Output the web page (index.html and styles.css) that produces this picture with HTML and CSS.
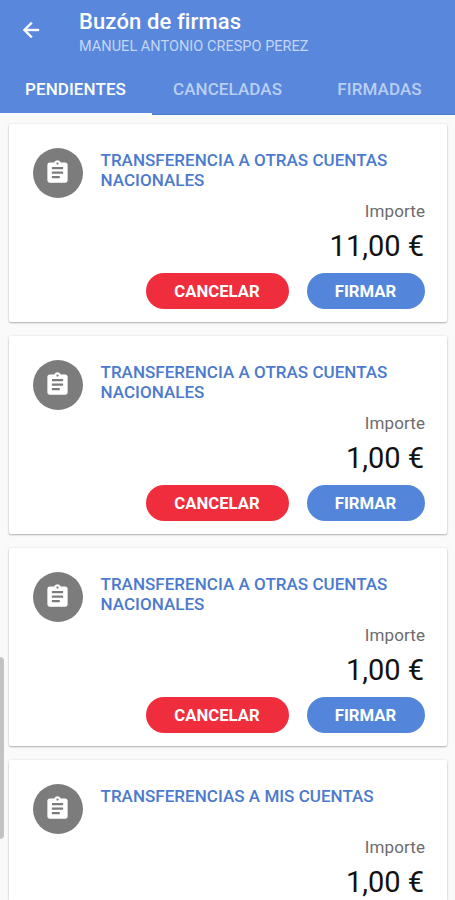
FILE: index.html
```
<!DOCTYPE html>
<html lang="es">
<head>
<meta charset="utf-8">
<title>Buzón de firmas</title>
<link rel="stylesheet" href="styles.css">
</head>
<body>
<svg width="0" height="0" class="defs">
  <symbol id="clipboard" viewBox="0 0 24 24"><path fill="#fff" d="M19 3h-4.18C14.4 1.84 13.3 1 12 1s-2.4.84-2.82 2H5c-1.1 0-2 .9-2 2v14c0 1.1.9 2 2 2h14c1.1 0 2-.9 2-2V5c0-1.1-.9-2-2-2zm-7 0c.55 0 1 .45 1 1s-.45 1-1 1-1-.45-1-1 .45-1 1-1zm2 14H7v-2h7v2zm3-4H7v-2h10v2zm0-4H7V7h10v2z"/></symbol>
</svg>
<header class="header">
  <div class="bar">
    <svg class="back" viewBox="0 0 24 24"><path fill="#fff" stroke="#fff" stroke-width=".4" d="M20 11H7.83l5.59-5.59L12 4l-8 8 8 8 1.41-1.41L7.83 13H20z"/></svg>
    <div>
      <h1 class="title">Buzón de firmas</h1>
      <div class="user">MANUEL ANTONIO CRESPO PEREZ</div>
    </div>
  </div>
  <nav class="tabs">
    <div class="tab active"><span>PENDIENTES</span></div>
    <div class="tab"><span>CANCELADAS</span></div>
    <div class="tab"><span>FIRMADAS</span></div>
  </nav>
</header>
<main class="list">
  <article class="card">
    <div class="top"><div class="avatar"><svg><use href="#clipboard"/></svg></div><h2 class="name">TRANSFERENCIA A OTRAS CUENTAS NACIONALES</h2></div>
    <div class="label">Importe</div>
    <div class="amount">11,00 €</div>
    <div class="actions"><button class="btn cancel">CANCELAR</button><button class="btn sign">FIRMAR</button></div>
  </article>
  <article class="card">
    <div class="top"><div class="avatar"><svg><use href="#clipboard"/></svg></div><h2 class="name">TRANSFERENCIA A OTRAS CUENTAS NACIONALES</h2></div>
    <div class="label">Importe</div>
    <div class="amount">1,00 €</div>
    <div class="actions"><button class="btn cancel">CANCELAR</button><button class="btn sign">FIRMAR</button></div>
  </article>
  <article class="card">
    <div class="top"><div class="avatar"><svg><use href="#clipboard"/></svg></div><h2 class="name">TRANSFERENCIA A OTRAS CUENTAS NACIONALES</h2></div>
    <div class="label">Importe</div>
    <div class="amount">1,00 €</div>
    <div class="actions"><button class="btn cancel">CANCELAR</button><button class="btn sign">FIRMAR</button></div>
  </article>
  <article class="card last">
    <div class="top"><div class="avatar"><svg><use href="#clipboard"/></svg></div><h2 class="name">TRANSFERENCIAS A MIS CUENTAS</h2></div>
    <div class="label">Importe</div>
    <div class="amount">1,00 €</div>
  </article>
</main>
<div class="handle"></div>
</body>
</html>
```
FILE: styles.css
```
* { box-sizing: border-box; }
body {
  margin: 0;
  height: 900px;
  overflow: hidden;
  background: #fafafa;
  font-family: Roboto, sans-serif;
}
.defs { display: block; }
.header {
  height: 115px;
  background: #5987db;
  border-bottom: 1px solid #4f7cca;
  color: #fff;
}
.bar {
  display: flex;
  height: 65px;
  padding: 9px 0 0 19px;
}
.back { width: 24px; height: 24px; margin: 9px 36px 0 0; }
.title {
  margin: 0;
  font-size: 22px;
  font-weight: 500;
  line-height: 26px;
  letter-spacing: .12px;
}
.user {
  font-size: 14.5px;
  line-height: 23px;
  letter-spacing: .03px;
  color: #c4d6f5;
}
.tabs { display: grid; grid-template-columns: 151px 153px 151px; height: 50px; }
.tab {
  display: flex;
  justify-content: center;
  padding-top: 13px;
  font-size: 17px;
  font-weight: 500;
  line-height: 22px;
  letter-spacing: .08px;
  color: #b9cef3;
}
.tab.active { width: 152px; padding-right: 1px; color: #fff; border-bottom: 2px solid #fff; }
.list {
  display: flex;
  flex-direction: column;
  gap: 14px;
  height: 785px;
  overflow: hidden;
  padding: 9px 8px 0 9px;
}
.card {
  height: 198px;
  flex: none;
  padding: 24px 23px 0 24px;
  background: #fff;
  border-radius: 2px;
  box-shadow: 0 1px 2px rgba(0, 0, 0, .28), 0 0 3px rgba(0, 0, 0, .08);
}
.card.last { height: 140px; border-radius: 2px 2px 0 0; }
.top { display: flex; height: 53px; }
.avatar {
  display: flex;
  align-items: center;
  justify-content: center;
  width: 50px;
  height: 50px;
  margin-right: 17.5px;
  border-radius: 50%;
  background: #7c7c7c;
  flex: none;
}
.avatar svg { width: 27px; height: 27px; margin: 0 1px 1px 0; }
.name {
  margin: 2px 0 0;
  font-size: 17px;
  font-weight: 500;
  line-height: 20px;
  letter-spacing: .03px;
  color: #4b7ace;
}
.label {
  margin-right: -1px;
  font-size: 17px;
  line-height: 20px;
  letter-spacing: .1px;
  text-align: right;
  color: #6c6c6c;
}
.amount {
  margin-top: 7px;
  font-size: 29px;
  line-height: 36px;
  text-align: right;
  color: #111;
}
.actions { display: flex; justify-content: flex-end; gap: 18px; margin: 9px -1px 0 0; }
.btn {
  height: 36px;
  padding: 2px 1px 0 0;
  border: 0;
  border-radius: 18px;
  font: 700 16.7px/20px Roboto, sans-serif;
  color: #fff;
}
.cancel { width: 143px; background: #ef2d3c; }
.sign { width: 118px; background: #5386da; }
.handle {
  position: absolute;
  left: 0;
  top: 657px;
  width: 4px;
  height: 182px;
  border-radius: 0 4px 4px 0;
  background: #c3c3c1;
}
```
